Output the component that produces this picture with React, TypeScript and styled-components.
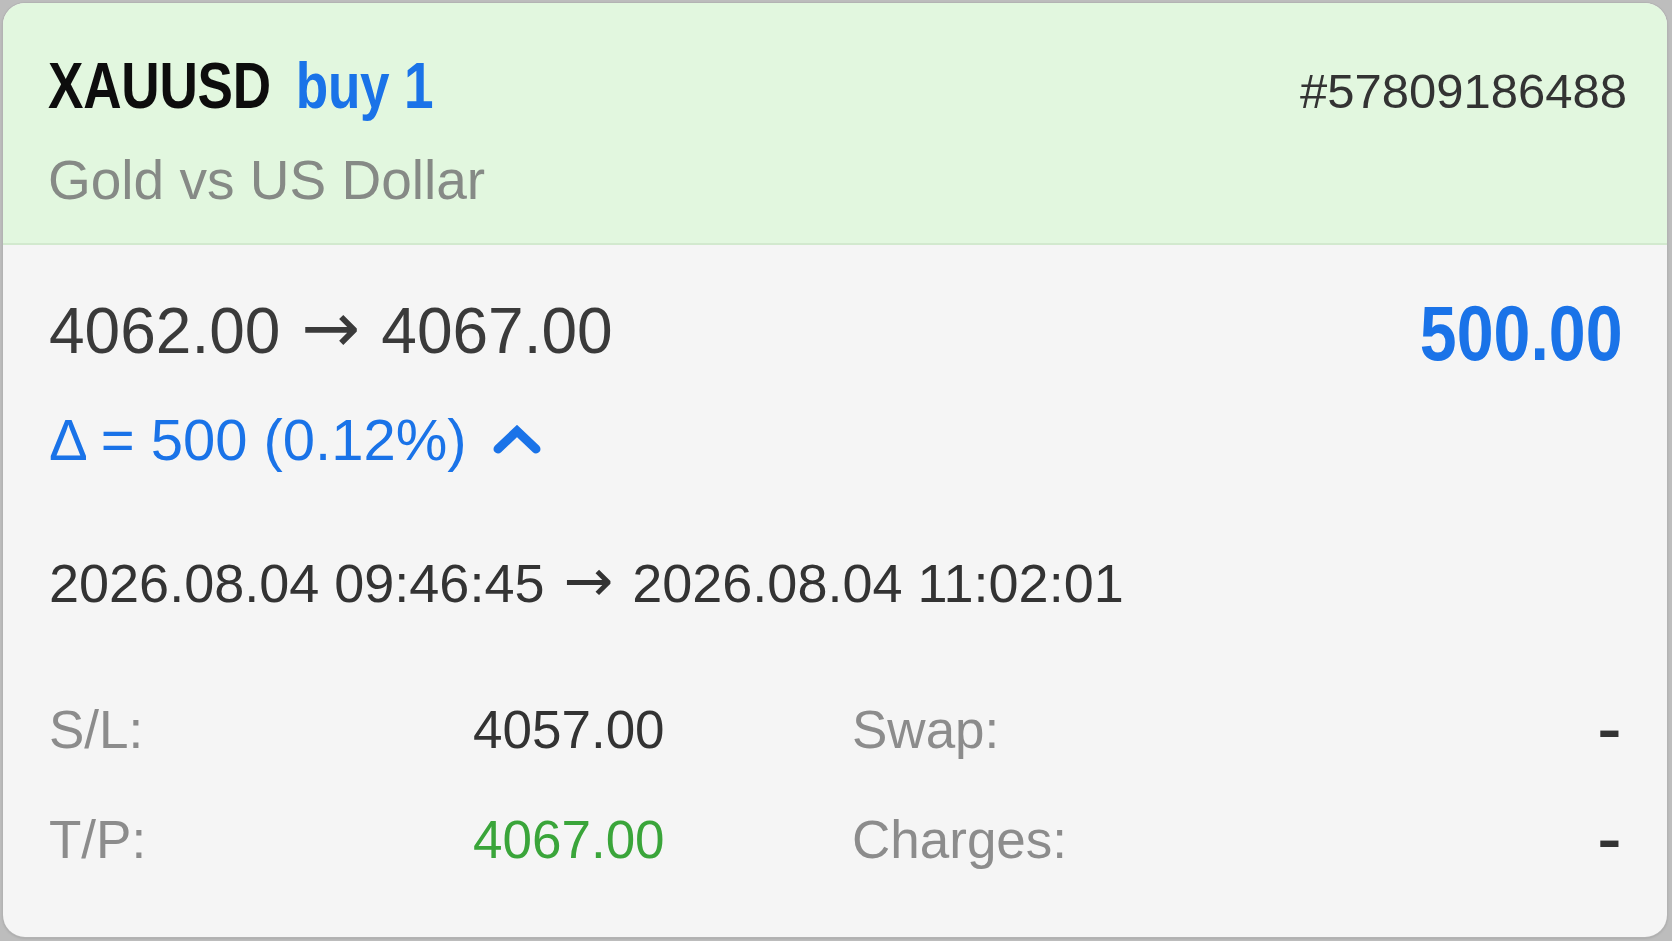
import React from "react";
import styled, { createGlobalStyle } from "styled-components";

const Global = createGlobalStyle`
  html, body {
    margin: 0;
    padding: 0;
    background: #bdbdbd;
  }
  body {
    font-family: "Liberation Sans", Arial, sans-serif;
  }
  #root {
    height: 100vh;
  }
`;

const Page = styled.div`
  box-sizing: border-box;
  height: 100vh;
  padding: 3px 5px 4px 3px;
  display: flex;
`;

const Card = styled.div`
  flex: 1;
  display: flex;
  flex-direction: column;
  border-radius: 22px;
  overflow: hidden;
  background: #f5f5f5;
  box-shadow: 0 0 0 1px #b3b3b3, 0 1px 3px rgba(0, 0, 0, 0.18);
`;

const Header = styled.div`
  display: flex;
  justify-content: space-between;
  align-items: flex-start;
  padding: 51px 40px 35px 45px;
  background: #e2f7df;
  border-bottom: 2px solid #d2e9ce;
`;

const TitleBlock = styled.div`
  display: flex;
  flex-direction: column;
  gap: 35px;
`;

const Title = styled.div`
  display: inline-block;
  font-weight: 700;
  font-size: 64px;
  line-height: 1;
  color: #0d0d0d;
  white-space: nowrap;
  transform: scaleX(0.83);
  transform-origin: left center;
  letter-spacing: -0.3px;
`;

const Side = styled.span`
  color: #1a73e8;
  margin-left: 30px;
`;

const Subtitle = styled.div`
  font-size: 55px;
  line-height: 1;
  color: #868a86;
`;

const Ticket = styled.div`
  font-size: 49px;
  line-height: 1;
  color: #333;
  margin-top: 13px;
`;

const Body = styled.div`
  flex: 1;
  display: flex;
  flex-direction: column;
  padding: 48px 44px 0 46px;
`;

const PriceRow = styled.div`
  display: flex;
  justify-content: space-between;
  align-items: center;
  height: 76px;
`;

const Prices = styled.div`
  font-size: 64px;
  line-height: 1;
  color: #3a3a3a;
  white-space: nowrap;
`;

const Arrow = styled.span<{ $gap: number }>`
  font-family: "DejaVu Sans", "Liberation Sans", sans-serif;
  font-size: 1.1em;
  line-height: 0;
  margin: 0 ${(p) => p.$gap}px;
  position: relative;
  top: -0.02em;
`;

const Profit = styled.div`
  display: inline-block;
  font-weight: 700;
  font-size: 78px;
  line-height: 1;
  color: #1a73e8;
  margin-top: 4px;
  transform: scaleX(0.85);
  transform-origin: right center;
`;

const DeltaRow = styled.div`
  display: flex;
  align-items: center;
  gap: 26px;
  margin-top: 42px;
  font-size: 58px;
  line-height: 1;
  color: #1a73e8;
  white-space: nowrap;
`;

const Chevron = styled.svg`
  width: 48px;
  height: 30px;
  display: block;
  margin-top: -1px;
`;

const Dates = styled.div`
  margin-top: 87px;
  font-size: 54px;
  line-height: 1;
  color: #333;
  white-space: nowrap;
`;

const Grid = styled.div`
  margin-top: 93px;
  display: grid;
  grid-template-columns: 424px 190px 1fr auto;
  row-gap: 57px;
  font-size: 53px;
  line-height: 1;
`;

const Label = styled.div<{ $indent?: boolean }>`
  color: #8c8c8c;
  padding-left: ${(p) => (p.$indent ? "189px" : "0")};
  white-space: nowrap;
`;

const Value = styled.div<{ $tone?: "dark" | "green" }>`
  color: ${(p) => (p.$tone === "green" ? "#3aa53a" : "#333")};
  text-align: right;
  white-space: nowrap;
`;

const Dash = styled.div`
  color: #333;
  text-align: right;
  font-weight: 700;
  padding-right: 1px;
  transform: scaleX(1.35);
  transform-origin: right center;
`;

export default function App() {
  return (
    <>
      <Global />
      <Page>
        <Card>
          <Header>
            <TitleBlock>
              <div>
                <Title>
                  XAUUSD<Side>buy 1</Side>
                </Title>
              </div>
              <Subtitle>Gold vs US Dollar</Subtitle>
            </TitleBlock>
            <Ticket>#57809186488</Ticket>
          </Header>
          <Body>
            <PriceRow>
              <Prices>
                4062.00<Arrow $gap={21}>→</Arrow>4067.00
              </Prices>
              <Profit>500.00</Profit>
            </PriceRow>
            <DeltaRow>
              <span>Δ = 500 (0.12%)</span>
              <Chevron viewBox="0 0 48 30" aria-hidden="true">
                <path
                  d="M5 24 L24 6 L43 24"
                  fill="none"
                  stroke="#1a73e8"
                  strokeWidth="9"
                  strokeLinecap="round"
                  strokeLinejoin="miter"
                />
              </Chevron>
            </DeltaRow>
            <Dates>
              2026.08.04 09:46:45<Arrow $gap={19}>→</Arrow>2026.08.04 11:02:01
            </Dates>
            <Grid>
              <Label>S/L:</Label>
              <Value>4057.00</Value>
              <Label $indent>Swap:</Label>
              <Dash>-</Dash>
              <Label>T/P:</Label>
              <Value $tone="green">4067.00</Value>
              <Label $indent>Charges:</Label>
              <Dash>-</Dash>
            </Grid>
          </Body>
        </Card>
      </Page>
    </>
  );
}
